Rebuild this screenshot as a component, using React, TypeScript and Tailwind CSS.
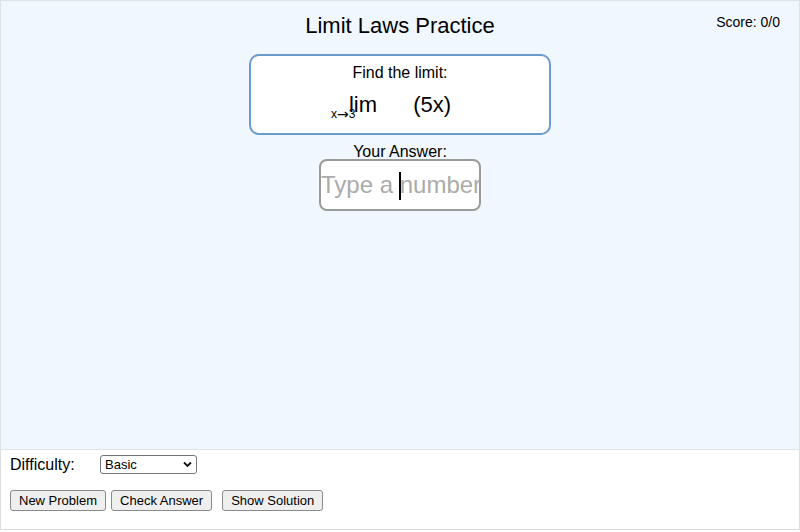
import React from "react";

export default function App() {
  return (
    <div className="w-[800px] h-[532px] bg-white text-black font-['Liberation_Sans',Arial,sans-serif]">
      <div className="relative h-[450px] border border-[#dde3ea] bg-[#f0f7ff] flex flex-col items-center">
        <div className="absolute top-[13px] right-[19px] text-[14px] leading-[16px]">Score: 0/0</div>
        <h1 className="mt-[12px] text-[22px] leading-[25px] font-normal">Limit Laws Practice</h1>
        <div className="mt-[16px] w-[302px] h-[81px] border-2 border-[#6a9bcf] rounded-[10px] bg-white flex flex-col items-center pt-[8px]">
          <div className="text-[16px] leading-[18px]">Find the limit:</div>
          <div className="mt-[10px] text-[22px] leading-[25px] whitespace-nowrap">
            <span>lim</span>
            <span className="relative inline-block w-[30px] left-[-46px] top-[6px] text-[12px] leading-[12px] text-left">
              x<span className="relative top-[1px] font-['DejaVu_Sans',sans-serif] text-[14px] leading-[12px]">→</span>3
            </span>
            <span> (5x)</span>
          </div>
        </div>
        <div className="mt-[8px] text-[16px] leading-[18px]">Your Answer:</div>
        <div className="relative mt-[-2px]">
          <input
            type="text"
            placeholder="Type a number"
            className="block w-[162px] h-[52px] border-2 border-[#9a9a9a] rounded-[8px] bg-white px-0 text-center text-[24px] outline-none placeholder:text-[#ababab]"
          />
          <div className="absolute left-[80px] top-[13px] w-[2px] h-[28px] bg-black" />
        </div>
      </div>
      <div className="h-[80px] border-x border-b border-[#dddddd] px-[9px] pt-[5px]">
        <div className="flex items-center h-[19px]">
          <span className="w-[90px] text-[16px] leading-[18px]">Difficulty:</span>
          <div className="relative">
            <select className="appearance-none block w-[97px] h-[19px] border border-[#767676] rounded-[3px] bg-white pl-[4px] text-[13px] leading-[15px]">
              <option>Basic</option>
              <option>Intermediate</option>
              <option>Advanced</option>
            </select>
            <svg className="pointer-events-none absolute right-[5px] top-[6px]" width="9" height="7" viewBox="0 0 9 7">
              <path d="M1 1.5 L4.5 5 L8 1.5" fill="none" stroke="#111" strokeWidth="1.8" />
            </svg>
          </div>
        </div>
        <div className="mt-[16px] flex items-center">
          <button className="h-[21px] px-[8px] border border-[#8a8a8a] rounded-[3px] bg-[#efefef] text-[13px] leading-[15px]">New Problem</button>
          <button className="ml-[5px] h-[21px] px-[8px] border border-[#8a8a8a] rounded-[3px] bg-[#efefef] text-[13px] leading-[15px]">Check Answer</button>
          <button className="ml-[10px] h-[21px] px-[8px] border border-[#8a8a8a] rounded-[3px] bg-[#efefef] text-[13px] leading-[15px]">Show Solution</button>
        </div>
      </div>
    </div>
  );
}
